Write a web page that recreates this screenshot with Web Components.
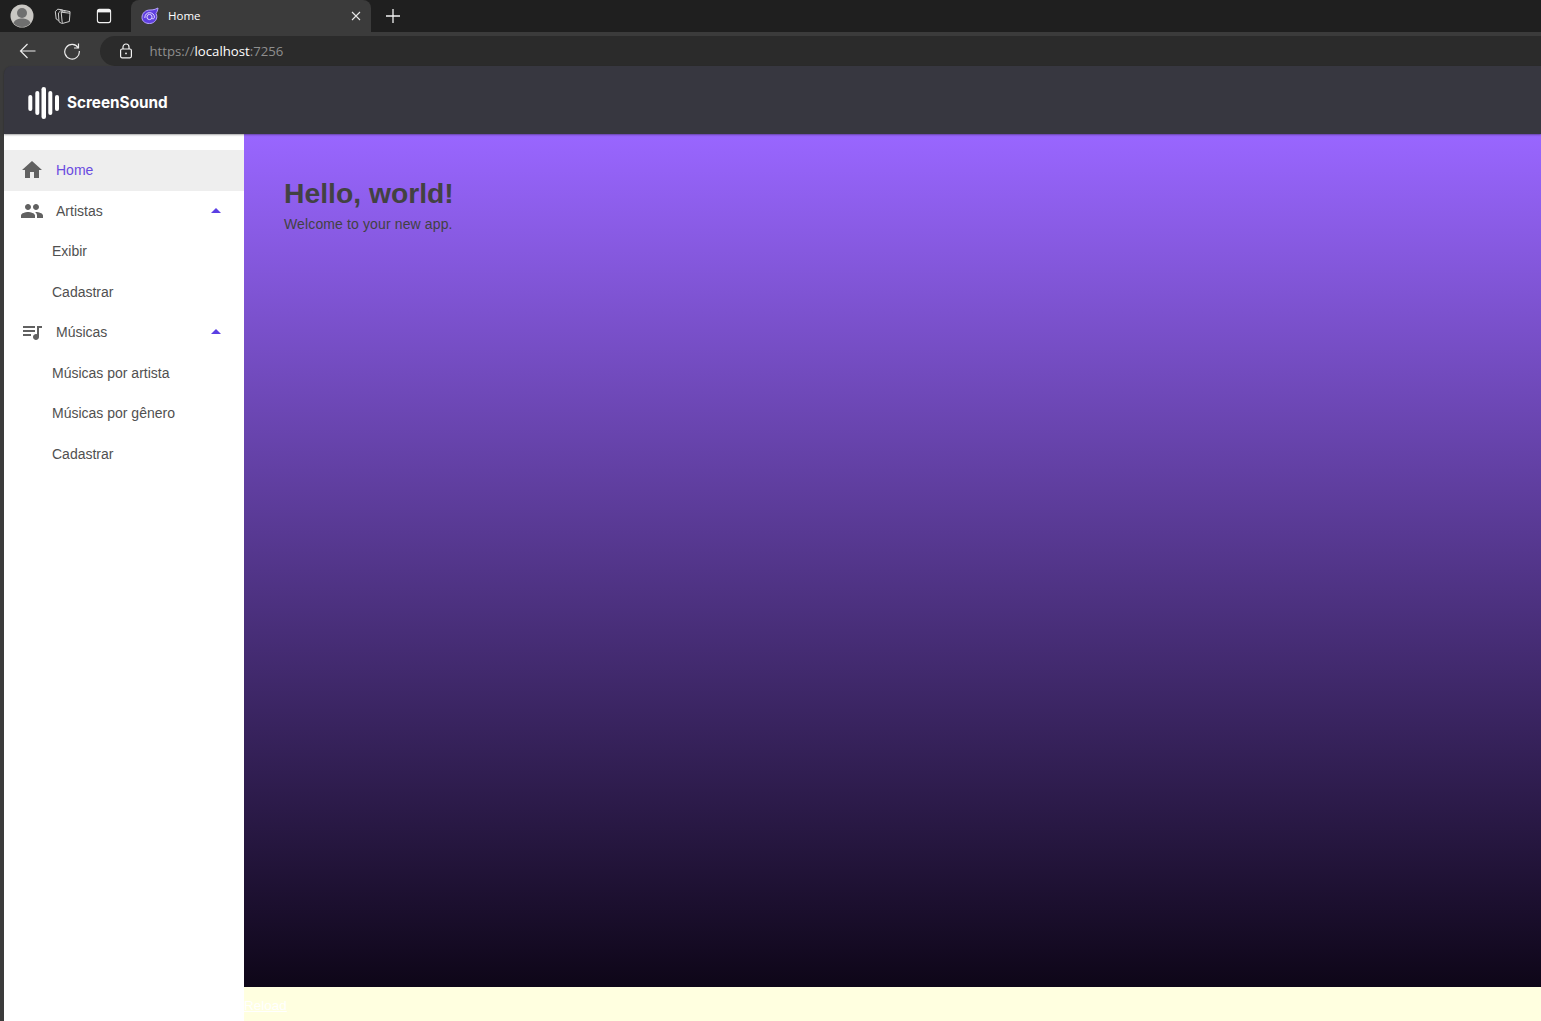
<!DOCTYPE html>
<html lang="pt-BR">
<head>
<meta charset="utf-8">
<title>Home</title>
<style>
html, body { margin: 0; height: 100%; overflow: hidden; }
body { font-family: "Liberation Sans", Arial, sans-serif; background: #3b3b3b; }
</style>
</head>
<body>
<browser-frame></browser-frame>
<app-layout>
    <nav-item slot="nav" icon="home" active>Home</nav-item>
    <nav-item slot="nav" icon="group" expanded>Artistas</nav-item>
    <nav-item slot="nav" child>Exibir</nav-item>
    <nav-item slot="nav" child>Cadastrar</nav-item>
    <nav-item slot="nav" icon="queue" expanded>Músicas</nav-item>
    <nav-item slot="nav" child>Músicas por artista</nav-item>
    <nav-item slot="nav" child>Músicas por gênero</nav-item>
    <nav-item slot="nav" child>Cadastrar</nav-item>
    <h-page title="Hello, world!">Welcome to your new app.</h-page>
</app-layout>
<script>
const ICONS = {
    home: 'M10 20v-6h4v6h5v-8h3L12 3 2 12h3v8z',
    group: 'M16 11c1.66 0 2.99-1.34 2.99-3S17.66 5 16 5c-1.66 0-3 1.34-3 3s1.34 3 3 3zm-8 0c1.66 0 2.99-1.34 2.99-3S9.66 5 8 5C6.34 5 5 6.34 5 8s1.34 3 3 3zm0 2c-2.33 0-7 1.17-7 3.5V19h14v-2.5c0-2.33-4.67-3.5-7-3.5zm8 0c-.29 0-.62.02-.97.05 1.16.84 1.97 1.97 1.97 3.45V19h6v-2.5c0-2.33-4.67-3.5-7-3.5z',
    queue: 'M15 6H3v2h12V6zm0 4H3v2h12v-2zM3 16h8v-2H3v2zM17 6v8.18c-.31-.11-.65-.18-1-.18-1.66 0-3 1.34-3 3s1.34 3 3 3 3-1.34 3-3V8h3V6h-5z'
}

class BrowserFrame extends HTMLElement {
    constructor() {
        super()
        this.attachShadow({ mode: 'open' })
    }
    connectedCallback() {
        this.shadowRoot.innerHTML = `
            <style>
                :host { display: block; font-family: "Open Sans", "Noto Sans", sans-serif; color: #fff; }
                .strip { height: 32px; background: #1f1f1f; display: flex; align-items: stretch; }
                .strip__btn { display: flex; align-items: center; justify-content: center; flex: none; }
                .tab { width: 240px; height: 32px; margin-left: 3px; box-sizing: border-box; background: #3b3b3b; border-radius: 8px 8px 0 0; display: flex; align-items: center; padding: 0 10.500px 0 10px; flex: none; }
                .tab__title { font-size: 11.500px; line-height: 30px; height: 30px; margin: 0 0 1px 9px; flex: 1; }
                .tab__new { width: 43px; display: flex; align-items: center; justify-content: center; flex: none; }
                .bar { height: 34px; background: #3b3b3b; display: flex; align-items: flex-end; }
                .bar__btn { width: 44px; height: 30px; display: flex; align-items: center; justify-content: center; flex: none; }
                .url { flex: 1; margin-left: 6px; height: 30px; background: #2b2b2b; border-radius: 15px 0 0 15px; display: flex; align-items: center; padding-left: 19px; }
                .url__text { font-size: 13.200px; margin-left: 16.500px; color: #8f8f8f; }
                .url__text b { font-weight: 400; color: #fff; }
            </style>
            <div class="strip">
                <div class="strip__btn" style="width:44px">
                    <svg width="24" height="24" viewBox="0 0 24 24"><circle cx="12" cy="12" r="11.500" fill="#c9c7c3"/><circle cx="12" cy="9" r="5" fill="#6f6f6f"/><path d="M3.500 19c1.500-3.500 5-4.500 8.500-4.500s7 1 8.500 4.500c-2 2.500-5 4-8.500 4s-6.500-1.500-8.500-4z" fill="#6f6f6f"/></svg>
                </div>
                <div class="strip__btn" style="width:36px">
                    <svg width="18" height="18" viewBox="0 0 18 18" fill="none" stroke="#e2e2e2" stroke-width=".9" stroke-linejoin="round"><path d="M8.200 5.200l8.800 1-.7 8.300-7 2z"/><path d="M8.200 5.200l2.300-1.800 6.500 1.200v1.600"/><path d="M8.700 16.500l-2.700-1.700-.6-8.800 2.400-2.300 4.700.5"/><path d="M5.500 13.500l-2.300-1.500-.9-7.500 2.500-2.300 5 .7"/></svg>
                </div>
                <div class="strip__btn" style="width:48px">
                    <svg width="16" height="16" viewBox="0 0 16 16" fill="none" stroke="#f2f2f2" stroke-width="1.100"><rect x="1.400" y="1.400" width="13.200" height="13.200" rx="2"/><path d="M1.400 3.200h13.200" stroke-width="2.400"/></svg>
                </div>
                <div class="tab">
                    <svg width="18" height="18" viewBox="0 0 18 18"><path d="M1 10.500C1 6 4.500 3 9 3c3 0 5-.5 8-2-.5 3-1 4-2 5.500.500 1 .8 2 .8 3.200C15.800 13.500 12.500 16.500 8.500 16.500 4.500 16.500 1 14.500 1 10.500z" fill="#5f3fe0" stroke="#b9a6ff" stroke-width="1"/><circle cx="8.500" cy="10" r="2.600" fill="none" stroke="#e4dcff" stroke-width="1"/><path d="M3.800 11c0-3.500 2.200-5.300 4.700-5.300s4.900 1.700 4.900 4.300c0 2-2 2.500-2.500 1" fill="none" stroke="#e4dcff" stroke-width="1"/></svg>
                    <span class="tab__title">Home</span>
                    <svg width="10" height="10" viewBox="0 0 10 10" stroke="#e8e8e8" stroke-width="1.100"><path d="M1 1l8 8M9 1l-8 8"/></svg>
                </div>
                <div class="tab__new">
                    <svg width="16" height="16" viewBox="0 0 16 16" stroke="#f2f2f2" stroke-width="1.300"><path d="M8 1v14M1 8h14"/></svg>
                </div>
            </div>
            <div class="bar">
                <div class="bar__btn" style="margin-left:6px">
                    <svg width="18" height="18" viewBox="0 0 18 18" fill="none" stroke="#ececec" stroke-width="1.200"><path d="M1.500 9h15M8.500 2l-7 7 7 7"/></svg>
                </div>
                <div class="bar__btn">
                    <svg width="18" height="18" viewBox="0 0 18 18" fill="none" stroke="#ececec" stroke-width="1.200"><path d="M15.300 6A7.300 7.300 0 1 0 16.300 9"/><path d="M15.500 1.500V6H11"/></svg>
                </div>
                <div class="url">
                    <svg width="14" height="16" viewBox="0 0 14 16" fill="none" stroke="#f2f2f2" stroke-width="1.200"><rect x="1.600" y="6" width="10.800" height="8.800" rx="1.500"/><path d="M4 6V4a3 3 0 0 1 6 0v2"/><circle cx="7" cy="10.400" r=".9" fill="#f2f2f2" stroke="none"/></svg>
                    <span class="url__text">https://<b>localhost</b>:7256</span>
                </div>
            </div>
        `
    }
}

class AppBar extends HTMLElement {
    constructor() {
        super()
        this.attachShadow({ mode: 'open' })
    }
    connectedCallback() {
        this.shadowRoot.innerHTML = `
            <style>
                :host { display: flex; align-items: center; height: 68px; box-sizing: border-box; padding: 6px 0 0 24px; background: #373740; border-radius: 8px 0 0 0; box-shadow: 0 1px 2px rgba(0,0,0,.35); position: relative; z-index: 1; }
                svg { display: block; flex: none; }
                span { font-family: Inter, sans-serif; font-weight: 700; font-size: 15.300px; color: #fff; margin: 0 0 2px 8px; }
            </style>
            <svg width="31" height="32" viewBox="0 0 31 32" fill="#fff">
                <rect x="0.300" y="8" width="4" height="16" rx="2"/>
                <rect x="7.300" y="4" width="4" height="24" rx="2"/>
                <rect x="13.500" y="0" width="4.500" height="32" rx="2.250"/>
                <rect x="20.300" y="4" width="4" height="24" rx="2"/>
                <rect x="27" y="8" width="4" height="16" rx="2"/>
            </svg>
            <span>ScreenSound</span>
        `
    }
}

class NavItem extends HTMLElement {
    constructor() {
        super()
        this.attachShadow({ mode: 'open' })
    }
    connectedCallback() {
        const icon = this.getAttribute('icon')
        const iconMarkup = icon
            ? `<svg class="icon" viewBox="0 0 24 24" fill="#616161"><path d="${ICONS[icon]}"/></svg>`
            : ''
        const arrow = this.hasAttribute('expanded')
            ? `<svg class="arrow" viewBox="0 0 24 24" fill="#5b3fe3"><path d="M7 14l5-5 5 5z"/></svg>`
            : ''
        this.shadowRoot.innerHTML = `
            <style>
                :host { display: flex; align-items: center; height: 40.500px; box-sizing: border-box; padding: 0 16px; font-size: 14px; color: #505050; }
                :host([active]) { background: #eeeeee; color: #6a4be0; }
                :host([child]) { padding-left: 48px; }
                .icon { width: 24px; height: 24px; flex: none; margin-right: 12px; }
                .label { flex: 1; }
                .arrow { width: 24px; height: 24px; flex: none; }
            </style>
            ${iconMarkup}<span class="label"><slot></slot></span>${arrow}
        `
    }
}

class HPage extends HTMLElement {
    constructor() {
        super()
        this.attachShadow({ mode: 'open' })
    }
    connectedCallback() {
        this.shadowRoot.innerHTML = `
            <style>
                :host { display: block; padding: 41px 40px 0; color: #424242; }
                h1 { margin: 0; font-size: 28.300px; line-height: 36px; font-weight: 700; }
                p { margin: 3px 0 0; font-size: 14px; line-height: 20px; letter-spacing: .13px; }
            </style>
            <h1>${this.getAttribute('title')}</h1>
            <p><slot></slot></p>
        `
    }
}

class AppLayout extends HTMLElement {
    constructor() {
        super()
        this.attachShadow({ mode: 'open' })
    }
    connectedCallback() {
        this.shadowRoot.innerHTML = `
            <style>
                :host { display: grid; grid-template-columns: 240px 1fr; grid-template-rows: 68px 1fr; height: 955px; margin-left: 4px; }
                app-bar { grid-column: 1 / 3; }
                .nav { background: #fff; padding-top: 16px; }
                .main { display: flex; flex-direction: column; min-width: 0; }
                .page { flex: 1; background: linear-gradient(180deg, #9966ff 0%, #0e0618 100%); }
                .foot { height: 34px; flex: none; background: #ffffe0; font-size: 13.500px; display: flex; align-items: center; padding-top: 2px; box-sizing: border-box; }
                .foot a { color: #fff; text-decoration: underline; }
            </style>
            <app-bar></app-bar>
            <div class="nav"><slot name="nav"></slot></div>
            <div class="main">
                <div class="page"><slot></slot></div>
                <div class="foot"><a>Reload</a></div>
            </div>
        `
    }
}

customElements.define('browser-frame', BrowserFrame)
customElements.define('app-bar', AppBar)
customElements.define('nav-item', NavItem)
customElements.define('h-page', HPage)
customElements.define('app-layout', AppLayout)
</script>
</body>
</html>
